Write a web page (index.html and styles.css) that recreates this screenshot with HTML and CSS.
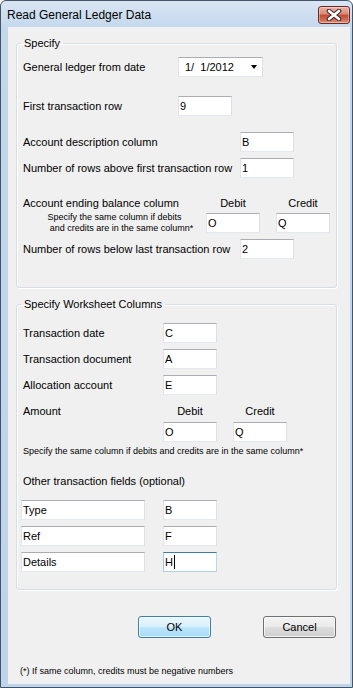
FILE: index.html
```html
<!DOCTYPE html>
<html lang="en">
<head>
    <meta charset="UTF-8">
    <title>Read General Ledger Data</title>
    <link rel="stylesheet" href="styles.css">
</head>
<body>
<div class="window">
    <div class="titlebar">
        <span class="title">Read General Ledger Data</span>
        <div class="close">
            <svg width="16" height="12" viewBox="0 0 16 12">
                <path d="M3 2 L13 10 M13 2 L3 10" stroke="#3a2a2a" stroke-width="4.6" stroke-linecap="round"/>
                <path d="M3 2 L13 10 M13 2 L3 10" stroke="#fff" stroke-width="2.6" stroke-linecap="round"/>
            </svg>
        </div>
    </div>
    <div class="client">
        <fieldset class="group group-specify">
            <legend>Specify</legend>
            <div class="row r-date">
                <span class="label w155">General ledger from date</span>
                <div class="datebox"><span class="date">1/  1/2012</span><span class="arrow"></span></div>
            </div>
            <div class="row r-first">
                <span class="label w155">First transaction row</span>
                <div class="textbox">9</div>
            </div>
            <div class="row r-desc">
                <span class="label w217">Account description column</span>
                <div class="textbox">B</div>
            </div>
            <div class="row r-above">
                <span class="label w217">Number of rows above first transaction row</span>
                <div class="textbox">1</div>
            </div>
            <div class="heads r-balance">
                <span class="label w183">Account ending balance column</span>
                <span class="col-head">Debit</span>
                <span class="col-head gap16">Credit</span>
            </div>
            <div class="row r-balance-in">
                <div class="note w183">
                    <div>Specify the same column if debits</div>
                    <div class="note-2">and credits are in the same column*</div>
                </div>
                <div class="textbox">O</div>
                <div class="textbox gap16">Q</div>
            </div>
            <div class="row r-below">
                <span class="label w217">Number of rows below last transaction row</span>
                <div class="textbox">2</div>
            </div>
        </fieldset>

        <fieldset class="group group-columns">
            <legend>Specify Worksheet Columns</legend>
            <div class="row r-tdate">
                <span class="label w140">Transaction date</span>
                <div class="textbox">C</div>
            </div>
            <div class="row r-next">
                <span class="label w140">Transaction document</span>
                <div class="textbox">A</div>
            </div>
            <div class="row r-next">
                <span class="label w140">Allocation account</span>
                <div class="textbox">E</div>
            </div>
            <div class="heads r-amount">
                <span class="label w140">Amount</span>
                <span class="col-head">Debit</span>
                <span class="col-head gap16">Credit</span>
            </div>
            <div class="row r-amount-in">
                <span class="label w140"></span>
                <div class="textbox">O</div>
                <div class="textbox gap16">Q</div>
            </div>
            <div class="note r-amount-note">Specify the same column if debits and credits are in the same column*</div>
            <div class="label r-other">Other transaction fields (optional)</div>
            <div class="row r-type">
                <div class="textbox wide">Type</div>
                <div class="textbox gap18">B</div>
            </div>
            <div class="row r-next">
                <div class="textbox wide">Ref</div>
                <div class="textbox gap18">F</div>
            </div>
            <div class="row r-next">
                <div class="textbox wide">Details</div>
                <div class="textbox gap18 focused">H<span class="caret"></span></div>
            </div>
        </fieldset>

        <div class="buttons">
            <div class="button default">OK</div>
            <div class="button cancel">Cancel</div>
        </div>
        <div class="note footer">(*) If same column, credits must be negative numbers</div>
    </div>
</div>
</body>
</html>
```

FILE: styles.css
```css
*{
    margin: 0;
    padding: 0;
    box-sizing: border-box;
}
body{
    font-family: "Liberation Sans", Arial, sans-serif;
    font-size: 11px;
    color: #000;
    background: #fff;
}
.window{
    width: 353px;
    height: 688px;
    border: 1px solid #435466;
    border-radius: 6px 6px 0 0;
    padding: 0 2px 3px 7px;
    background: linear-gradient(#d9e5f3, #c2d6ec 30px, #bfd4eb);
    display: flex;
    flex-direction: column;
}
.titlebar{
    height: 26px;
    display: flex;
    align-items: center;
    justify-content: space-between;
}
.title{
    font-size: 12px;
    margin-left: -1px;
    margin-top: 1px;
}
.close{
    width: 32px;
    height: 18px;
    margin-top: 1px;
    border: 1px solid #6b2a22;
    border-radius: 3px;
    background: linear-gradient(#eab1a4, #d98977 45%, #c44a33 50%, #cf6b52 80%, #e0927c);
    box-shadow: inset 0 0 0 1px rgba(255,255,255,0.35);
    display: flex;
    align-items: center;
    justify-content: center;
}
.client{
    flex: 1;
    background: #f0f0f0;
    display: flex;
    flex-direction: column;
}

/* group boxes */
.group{
    margin: 10px 13px 0 8px;
    border: 1px solid #d5dfe5;
    border-radius: 3px;
    box-shadow: inset 1px 1px 0 #fff, 1px 1px 0 #fff;
    padding: 0 6px 28px 6px;
    min-inline-size: 0;
}
.group legend{
    margin-left: -2px;
    padding: 0 3px;
    line-height: 13px;
}
.group-columns{
    margin-top: 10px;
    padding-bottom: 17px;
}

.row{
    display: flex;
    align-items: center;
    height: 20px;
}
.heads{
    display: flex;
    line-height: 13px;
}
.label{
    flex: none;
    line-height: 13px;
}
.w140{ width: 140px; }
.w155{ width: 155px; }
.w183{ width: 183px; }
.w217{ width: 217px; }
.gap16{ margin-left: 16px; }
.gap18{ margin-left: 18px; }

.col-head{
    width: 54px;
    text-align: center;
}

.textbox{
    flex: none;
    width: 54px;
    height: 20px;
    background: #fff;
    border: 1px solid;
    border-color: #abadb3 #dbdfe6 #e3e9ef #e2e3ea;
    padding: 0 1px;
    line-height: 18px;
    display: flex;
    align-items: center;
}
.textbox.wide{
    width: 124px;
    margin-left: -2px;
}
.textbox.focused{
    border-color: #3d7bad #b7d9ed #b5cfe7 #a4c9e3;
}
.caret{
    display: inline-block;
    width: 1px;
    height: 14px;
    background: #000;
    margin-left: 1px;
}

.datebox{
    width: 85px;
    height: 20px;
    background: #fff;
    border: 1px solid;
    border-color: #abadb3 #dbdfe6 #e3e9ef #e2e3ea;
    padding: 0 5px 0 6px;
    display: flex;
    align-items: center;
    justify-content: space-between;
}
.date{
    white-space: pre;
}
.arrow{
    width: 0;
    height: 0;
    border-left: 3.5px solid transparent;
    border-right: 3.5px solid transparent;
    border-top: 4px solid #000;
}

.note{
    font-size: 9px;
    line-height: 11px;
}
.note.w183{
    text-align: center;
}
.note-2{
    padding-left: 14px;
}

/* vertical spacing of the rows */
.r-date{ margin-top: 7px; }
.r-first{ margin-top: 19px; }
.r-desc{ margin-top: 16px; }
.r-above{ margin-top: 6px; }
.r-balance{ margin-top: 19px; }
.r-balance-in{ margin-top: 3px; }
.r-below{ margin-top: 6px; }
.r-tdate{ margin-top: 12px; }
.r-next{ margin-top: 6px; }
.r-amount{ margin-top: 10px; }
.r-amount-in{ margin-top: 4px; }
.r-amount-note{ margin-top: 4px; }
.r-other{ margin-top: 18px; }
.r-type{ margin-top: 12px; }

.buttons{
    display: flex;
    margin-top: 26px;
    padding-left: 130px;
}
.button{
    width: 73px;
    height: 22px;
    border: 1px solid #707070;
    border-radius: 3px;
    background: linear-gradient(#f2f2f2, #ebebeb 50%, #dddddd 50%, #cfcfcf);
    box-shadow: inset 0 0 0 1px rgba(255,255,255,0.7);
    display: flex;
    align-items: center;
    justify-content: center;
}
.button.default{
    border-color: #3c7fb1;
    background: linear-gradient(#eaf6fd, #d9f0fc 50%, #bee6fd 50%, #a7d9f5);
}
.button.cancel{
    margin-left: 52px;
}
.footer{
    margin-top: 28px;
    padding-left: 12px;
}
```
